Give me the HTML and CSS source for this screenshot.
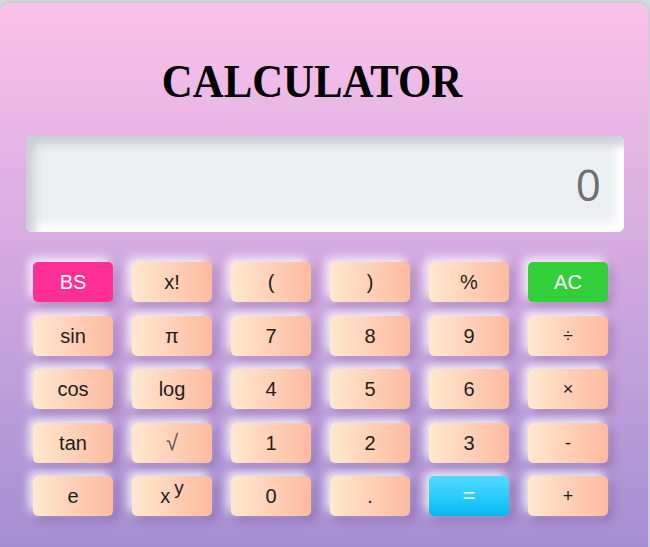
FILE: index.html
```html
<!DOCTYPE html>
<html lang="en">
<head>
<meta charset="utf-8">
<title>Calculator</title>
<link rel="stylesheet" href="styles.css">
</head>
<body>
<div class="calc">
  <h1 class="title">CALCULATOR</h1>
  <div class="display">0</div>
  <div class="keys">
    <button class="key key-bs">BS</button>
    <button class="key">x!</button>
    <button class="key">(</button>
    <button class="key">)</button>
    <button class="key">%</button>
    <button class="key key-ac">AC</button>

    <button class="key">sin</button>
    <button class="key">π</button>
    <button class="key">7</button>
    <button class="key">8</button>
    <button class="key">9</button>
    <button class="key key-op">÷</button>

    <button class="key">cos</button>
    <button class="key">log</button>
    <button class="key">4</button>
    <button class="key">5</button>
    <button class="key">6</button>
    <button class="key key-op">×</button>

    <button class="key">tan</button>
    <button class="key key-sqrt">√</button>
    <button class="key">1</button>
    <button class="key">2</button>
    <button class="key">3</button>
    <button class="key key-op">-</button>

    <button class="key">e</button>
    <button class="key">x<span class="sup">y</span></button>
    <button class="key">0</button>
    <button class="key">.</button>
    <button class="key key-eq">=</button>
    <button class="key key-op">+</button>
  </div>
</div>
</body>
</html>
```
FILE: styles.css
```css
html, body {
  margin: 0;
  padding: 0;
}
body {
  background: #d9dbde;
  height: 547px;
  overflow: hidden;
  font-family: "Liberation Sans", Arial, sans-serif;
}
.calc {
  width: 648px;
  margin-top: 3px;
  box-sizing: border-box;
  padding: 56px 24px 40px 26px;
  border-radius: 10px;
  background: linear-gradient(to top, #a18cd1 0%, #fbc2eb 100%);
  box-shadow: 0 0 6px rgba(0, 0, 0, 0.15);
  height: 570px;
}
.title {
  margin: 0 0 31px;
  font-family: "Liberation Serif", "Times New Roman", serif;
  font-weight: bold;
  font-size: 46px;
  line-height: 46px;
  text-align: center;
  color: #000;
  transform: scaleX(0.93);
  position: relative;
  left: -13px;
}
.display {
  height: 96px;
  box-sizing: border-box;
  border-radius: 6px;
  background: #eceff1;
  box-shadow: inset 8px 8px 10px #c9cfd2, inset -8px -8px 10px #ffffff;
  text-align: right;
  padding-right: 23px;
  font-family: "Open Sans", "Liberation Sans", sans-serif;
  font-size: 44px;
  line-height: 96px;
  color: #6e6e6e;
}
.keys {
  margin: 30px 0 0 7px;
  display: grid;
  grid-template-columns: repeat(6, 80px);
  grid-auto-rows: 40px;
  column-gap: 19px;
  row-gap: 13.5px;
}
.key {
  border: none;
  border-radius: 5px;
  padding: 0;
  background: linear-gradient(to right, #ffe8cf, #fdbaa0);
  box-shadow: -4px -4px 10px rgba(255, 255, 255, 0.85), 4px 4px 10px rgba(60, 20, 80, 0.25);
  font-family: "Liberation Sans", Arial, sans-serif;
  font-size: 20px;
  color: #1d1d1d;
  line-height: 40px;
}
.key-op {
  font-size: 18px;
}
.key-sqrt {
  color: #555;
  font-family: "DejaVu Sans", sans-serif;
  font-weight: 200;
  font-size: 22px;
}
.key-bs {
  background: #ff2f96;
  color: #fff;
}
.key-ac {
  background: #33cf3a;
  color: #fff;
}
.key-eq {
  background: linear-gradient(to bottom, #52d8ff 0%, #2ccdff 50%, #05b6ea 100%);
  color: #fff;
  font-size: 22px;
}
.sup {
  font-size: 19px;
  position: relative;
  top: -9px;
  margin-left: 4px;
}
```
